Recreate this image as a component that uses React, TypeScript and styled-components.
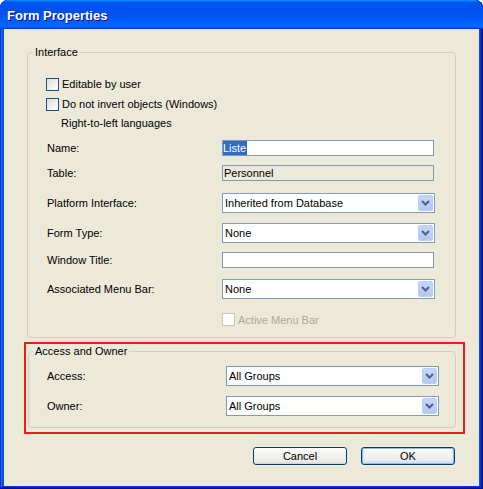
import React from "react";
import styled, { createGlobalStyle, css } from "styled-components";

const Global = createGlobalStyle`
  html, body { margin: 0; padding: 0; background: #ffffff; }
  body { font-family: "Liberation Sans", Arial, sans-serif; font-size: 11px; color: #000; }
`;

const Window = styled.div`
  width: 483px;
  height: 489px;
  box-sizing: border-box;
  display: flex;
  flex-direction: column;
  background: #0054e3;
  border-radius: 8px 8px 0 0;
  overflow: hidden;
  box-shadow: inset -1px -1px #00138c, inset 1px 1px #0831d9, inset -2px -2px #001ea0,
    inset 2px 2px #166aee, inset -3px -3px #003bda, inset 3px 3px #0855dd;
`;

const TitleBar = styled.div`
  height: 29px;
  flex: none;
  box-sizing: border-box;
  padding: 8px 0 0 7px;
  background: linear-gradient(
    180deg,
    #0997ff,
    #0053ee 8%,
    #0050ee 40%,
    #0066ff 88%,
    #0066ff 93%,
    #005bff 95%,
    #003dd7 96%,
    #003dd7
  );
  border-radius: 8px 8px 0 0;
  color: #fff;
  font-weight: bold;
  font-size: 13px;
  line-height: 15px;
  text-shadow: 1px 1px #0f1089;
`;

const Body = styled.div`
  flex: 1;
  margin: 0 4px 3px 4px;
  background: #ece9d8;
  display: flex;
  flex-direction: column;
`;

const Group = styled.fieldset<{ $mt: number; $ml: number; $w: number }>`
  margin: ${(p) => p.$mt}px 0 0 ${(p) => p.$ml}px;
  width: ${(p) => p.$w}px;
  min-width: 0;
  box-sizing: border-box;
  padding: 0;
  border: 1px solid #d0d0bf;
  border-radius: 4px;
`;

const Legend = styled.legend<{ $ml: number }>`
  margin-left: ${(p) => p.$ml}px;
  padding: 0 2px;
  height: 14px;
  line-height: 14px;
`;

const GroupInner = styled.div<{ $pt: number; $pb: number; $pl: number }>`
  display: flex;
  flex-direction: column;
  padding: ${(p) => p.$pt}px 0 ${(p) => p.$pb}px ${(p) => p.$pl}px;
`;

const Row = styled.div<{ $h: number; $mt?: number; $ml?: number }>`
  display: flex;
  align-items: center;
  height: ${(p) => p.$h}px;
  margin-top: ${(p) => p.$mt ?? 0}px;
  margin-left: ${(p) => p.$ml ?? 0}px;
`;

const Label = styled.span<{ $w: number }>`
  width: ${(p) => p.$w}px;
  flex: none;
`;

const CheckBox = styled.span<{ $disabled?: boolean }>`
  width: 13px;
  height: 13px;
  flex: none;
  box-sizing: border-box;
  border: 1px solid ${(p) => (p.$disabled ? "#cac8bb" : "#1c5180")};
  background: ${(p) =>
    p.$disabled ? "#ffffff" : "linear-gradient(135deg, #dcdcd7, #ffffff)"};
  margin-right: 3px;
`;

const CheckText = styled.span<{ $disabled?: boolean }>`
  color: ${(p) => (p.$disabled ? "#aca899" : "#000")};
`;

const TextBox = styled.div<{ $disabled?: boolean }>`
  width: 212px;
  height: 16px;
  box-sizing: border-box;
  border: 1px solid #7f9db9;
  background: ${(p) => (p.$disabled ? "#ece9d8" : "#ffffff")};
  display: flex;
  align-items: stretch;
  padding-left: ${(p) => (p.$disabled ? 1 : 0)}px;
  line-height: 14px;
`;

const Selected = styled.span`
  background: #316ac5;
  color: #fff;
  padding: 0 1px 0 0;
`;

const Select = styled.div`
  width: 213px;
  height: 20px;
  box-sizing: border-box;
  border: 1px solid #7f9db9;
  background: #fff;
  display: flex;
  align-items: center;
  padding: 1px 1px 1px 2px;
`;

const SelectText = styled.span`
  flex: 1;
`;

const DropButton = styled.span`
  width: 15px;
  height: 16px;
  box-sizing: border-box;
  border: 1px solid #b9cdf6;
  border-radius: 2px;
  background: linear-gradient(180deg, #c6d6fc, #b4c7f5);
  display: flex;
  align-items: center;
  justify-content: center;
`;

const RedFrame = styled.div`
  margin: 4px 0 0 20px;
  width: 441px;
  box-sizing: border-box;
  border: 2px solid #ee1c1c;
  padding: 0 7px 4px 2px;
`;

const ButtonRow = styled.div`
  display: flex;
  justify-content: flex-end;
  gap: 14px;
  margin-top: 13px;
  padding-right: 24px;
`;

const Button = styled.button<{ $default?: boolean }>`
  width: 94px;
  height: 18px;
  box-sizing: border-box;
  padding: 0;
  border: 1px solid #003c74;
  border-radius: 3px;
  background: linear-gradient(180deg, #ffffff, #f3f2ee 40%, #ecebe6 86%, #d6d0c5);
  font-family: "Liberation Sans", Arial, sans-serif;
  font-size: 11px;
  color: #000;
  ${(p) =>
    p.$default &&
    css`
      box-shadow: inset 0 0 0 1px #98b8ea, inset 0 -1px 0 2px #cee7ff;
    `}
`;

const Chevron = () => (
  <svg width="9" height="6" viewBox="0 0 9 6">
    <polyline points="1,1 4.5,4.5 8,1" fill="none" stroke="#4d6185" strokeWidth="2" />
  </svg>
);

const Dropdown = ({ value }: { value: string }) => (
  <Select>
    <SelectText>{value}</SelectText>
    <DropButton>
      <Chevron />
    </DropButton>
  </Select>
);

export default function App() {
  return (
    <>
      <Global />
      <Window>
        <TitleBar>Form Properties</TitleBar>
        <Body>
          <Group $mt={16} $ml={23} $w={429}>
            <Legend $ml={5}>Interface</Legend>
            <GroupInner $pt={15} $pb={11} $pl={19}>
              <Row $h={20} $ml={-1}>
                <CheckBox />
                <CheckText>Editable by user</CheckText>
              </Row>
              <Row $h={20} $ml={-1}>
                <CheckBox />
                <CheckText>Do not invert objects (Windows)</CheckText>
              </Row>
              <Row $h={18} $ml={14}>
                Right-to-left languages
              </Row>
              <Row $h={16} $mt={8}>
                <Label $w={175}>Name:</Label>
                <TextBox>
                  <Selected>Liste</Selected>
                </TextBox>
              </Row>
              <Row $h={16} $mt={9}>
                <Label $w={175}>Table:</Label>
                <TextBox $disabled>Personnel</TextBox>
              </Row>
              <Row $h={20} $mt={12}>
                <Label $w={175}>Platform Interface:</Label>
                <Dropdown value="Inherited from Database" />
              </Row>
              <Row $h={20} $mt={10}>
                <Label $w={175}>Form Type:</Label>
                <Dropdown value="None" />
              </Row>
              <Row $h={16} $mt={9}>
                <Label $w={175}>Window Title:</Label>
                <TextBox />
              </Row>
              <Row $h={20} $mt={11}>
                <Label $w={175}>Associated Menu Bar:</Label>
                <Dropdown value="None" />
              </Row>
              <Row $h={13} $mt={14} $ml={175}>
                <CheckBox $disabled />
                <CheckText $disabled>Active Menu Bar</CheckText>
              </Row>
            </GroupInner>
          </Group>
          <RedFrame>
            <Group $mt={0} $ml={0} $w={428}>
              <Legend $ml={4}>Access and Owner</Legend>
              <GroupInner $pt={8} $pb={11} $pl={18}>
                <Row $h={20}>
                  <Label $w={179}>Access:</Label>
                  <Dropdown value="All Groups" />
                </Row>
                <Row $h={20} $mt={10}>
                  <Label $w={179}>Owner:</Label>
                  <Dropdown value="All Groups" />
                </Row>
              </GroupInner>
            </Group>
          </RedFrame>
          <ButtonRow>
            <Button>Cancel</Button>
            <Button $default>OK</Button>
          </ButtonRow>
        </Body>
      </Window>
    </>
  );
}
